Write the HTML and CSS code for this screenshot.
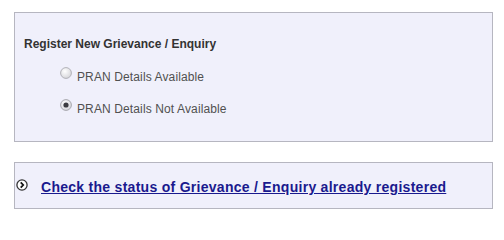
FILE: index.html
```html
<!DOCTYPE html>
<html lang="en">
<head>
<meta charset="utf-8">
<title>Grievance / Enquiry</title>
<link rel="stylesheet" href="styles.css">
</head>
<body>
<div class="page">
  <section class="panel register">
    <h2 class="panel-title">Register New Grievance / Enquiry</h2>
    <div class="options">
      <label class="option">
        <svg class="radio" width="12" height="12" viewBox="0 0 12 12" aria-hidden="true">
          <defs>
            <radialGradient id="rg1" cx="0.4" cy="0.35" r="0.7">
              <stop offset="0" stop-color="#ffffff"/>
              <stop offset="1" stop-color="#d4d4d8"/>
            </radialGradient>
          </defs>
          <circle cx="6" cy="6" r="5.4" fill="url(#rg1)" stroke="#b2b2b8" stroke-width="1"/>
        </svg>
        <span class="option-text">PRAN Details Available</span>
      </label>
      <label class="option">
        <svg class="radio" width="12" height="12" viewBox="0 0 12 12" aria-hidden="true">
          <defs>
            <radialGradient id="rg2" cx="0.4" cy="0.35" r="0.7">
              <stop offset="0" stop-color="#ffffff"/>
              <stop offset="1" stop-color="#d4d4d8"/>
            </radialGradient>
          </defs>
          <circle cx="6" cy="6" r="5.4" fill="url(#rg2)" stroke="#a8a8ae" stroke-width="1"/>
          <circle cx="6" cy="6" r="2.6" fill="#3c3c40"/>
        </svg>
        <span class="option-text">PRAN Details Not Available</span>
      </label>
    </div>
  </section>
  <section class="panel status">
    <svg class="bullet" width="12" height="12" viewBox="0 0 12 12" aria-hidden="true">
      <circle cx="6" cy="6" r="5.1" fill="#ffffff" stroke="#333333" stroke-width="1.3"/>
      <path d="M4.7 3.4 L7.2 6 L4.7 8.6" fill="none" stroke="#111111" stroke-width="1.8"/>
    </svg>
    <a class="status-link" href="#">Check the status of Grievance / Enquiry already registered</a>
  </section>
</div>
</body>
</html>
```

FILE: styles.css
```css
html, body {
  margin: 0;
  padding: 0;
  background: #ffffff;
}

body {
  font-family: "Liberation Sans", Arial, sans-serif;
}

.page {
  padding: 12px 0 0 14px;
  width: 479px;
  display: flex;
  flex-direction: column;
  gap: 20px;
}

.panel {
  background: #f0f0fb;
  border: 1px solid #b6b6c0;
}

.register {
  padding: 24px 10px 0 9px;
  height: 130px;
  box-sizing: border-box;
}

.panel-title {
  margin: 0;
  font-size: 12px;
  line-height: 14px;
  font-weight: bold;
  color: #333333;
}

.options {
  margin: 19px 0 0 36px;
  display: flex;
  flex-direction: column;
  gap: 18px;
}

.option {
  display: flex;
  align-items: center;
  height: 14px;
  font-size: 12px;
  line-height: 14px;
  color: #505050;
}

.radio {
  flex: none;
  margin: -4px 5px 4px 0;
}

.option-text {
  letter-spacing: 0.12px;
}

.status {
  height: 47px;
  box-sizing: border-box;
  padding: 16px 0 0 1px;
  display: flex;
  align-items: flex-start;
}

.bullet {
  flex: none;
  margin: 0 13px 0 0;
}

.status-link {
  font-size: 14px;
  line-height: 16px;
  font-weight: bold;
  color: #1a1a8e;
  text-decoration: underline;
  letter-spacing: 0.28px;
}
```
